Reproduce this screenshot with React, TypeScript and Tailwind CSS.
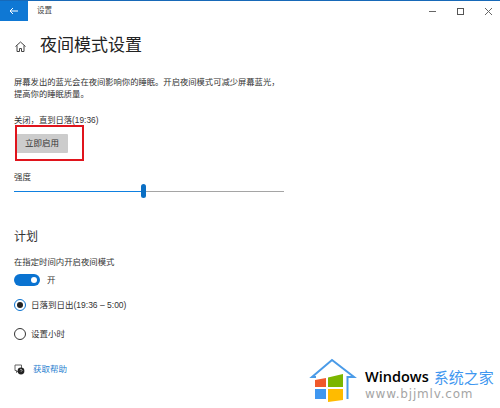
import React from "react";

const cjk = "font-['Liberation_Sans','Noto_Sans_CJK_SC',sans-serif]";
const comma = "\uFF0C";

function Logo() {
  return (
    <div className="absolute left-[308px] top-[357px] flex items-start gap-[8px] pr-[5px]">
      <svg width="49" height="46" viewBox="0 0 49 46" className="shrink-0">
        <path d="M8 20 H4 L24 3 L46 20 H39.500 V42" fill="none" stroke="#4a9be8" strokeWidth="2" />
        <path d="M7 23 L18 21 L18 30 L7 30Z" fill="#f0592b" />
        <path d="M20 20.500 L35 17 L35 30 L20 30Z" fill="#7cb600" />
        <path d="M7 32 L18 32 L18 42 L7 42Z" fill="#3f97f0" />
        <path d="M20 32 L35 32 L35 43 L20 45Z" fill="#ffbb00" />
      </svg>
      <div className="flex flex-col pt-[11px]">
        <div className="flex items-center gap-[5px] leading-[18px] whitespace-nowrap">
          <span className="font-['Open_Sans',sans-serif] text-[14.500px] font-semibold text-black">Windows</span>
          <span className="font-['Noto_Sans_CJK_SC',sans-serif] text-[15px] text-[#3f97f0]">系统之家</span>
        </div>
        <span className="mt-[1px] font-['DejaVu_Sans',sans-serif] text-[12px] leading-[14px] tracking-[0.8px] text-[#a5a5a5]">www.bjjmlv.com</span>
      </div>
    </div>
  );
}

export default function App() {
  return (
    <div className={`relative h-[408px] w-[500px] overflow-hidden bg-white text-[#222] ${cjk}`}>
      <div className="h-[1px] bg-[#1769b8]" />
      <header className="flex h-[20px] items-center">
        <div className="flex h-full w-[28px] items-center justify-center bg-[#0f78d4]">
          <svg width="10" height="8" viewBox="0 0 10 8" fill="none" stroke="#fff" strokeWidth="1">
            <path d="M9 4H1M4 1 1 4l3 3" />
          </svg>
        </div>
        <span className="ml-[9px] text-[7.500px] text-[#444]">设置</span>
        <div className="ml-auto flex items-center gap-[19.500px] pr-[7.500px]">
          <svg width="9" height="9" viewBox="0 0 9 9" stroke="#666" fill="none"><path d="M1 4.500h7" /></svg>
          <svg width="8" height="8" viewBox="0 0 8 8" stroke="#555" fill="none"><rect x="1.500" y="1.500" width="6" height="6" /></svg>
          <svg width="9" height="9" viewBox="0 0 9 9" stroke="#666" fill="none"><path d="M1 1l7 7M8 1 1 8" /></svg>
        </div>
      </header>

      <main className="pl-[14px]">
        <div className="mt-[13px] flex items-center">
          <svg width="13" height="13" viewBox="0 0 13 13" fill="none" stroke="#444" strokeWidth="1">
            <path d="M1.500 6.500 6.500 2l5 4.500M3 5.500v6h2.500V8.500h2v3H10v-6" />
          </svg>
          <h1 className="ml-[13px] text-[17px] leading-[24px] text-[#222]">夜间模式设置</h1>
        </div>

        <p className="mt-[19px] w-[280px] text-[8.300px] leading-[11.500px] text-[#333]">
          屏幕发出的蓝光会在夜间影响你的睡眠。开启夜间模式可减少屏幕蓝光{comma}
          <br />
          提高你的睡眠质量。
        </p>

        <p className="mt-[14px] text-[8.300px] leading-[12px] text-[#333]">关闭{comma}直到日落(19:36)</p>

        <button className="ml-[2px] mt-[8px] flex h-[19px] w-[52px] items-center justify-center rounded-[1px] bg-[#cccccc] text-[8.500px] text-[#333]">
          立即启用
        </button>

        <p className="mt-[18px] text-[8.500px] leading-[12px] text-[#333]">强度</p>
        <div className="flex h-[16px] w-[270px] items-center">
          <div className="h-[1px] w-[127px] bg-[#0f80e0]" />
          <div className="h-[14px] w-[5px] rounded-full bg-[#0b6fc4]" />
          <div className="h-[1px] flex-1 bg-[#a5a5a5]" />
        </div>

        <h2 className="mt-[28px] text-[12px] leading-[20px] text-[#333]">计划</h2>
        <p className="mt-[9px] text-[8.400px] leading-[12px] text-[#333]">在指定时间内开启夜间模式</p>
        <div className="mt-[6px] flex h-[12px] items-center">
          <div className="flex h-[12px] w-[26px] items-center justify-end rounded-full bg-[#0a73d1] pr-[3px]">
            <div className="h-[6px] w-[6px] rounded-full bg-white" />
          </div>
          <span className="ml-[7px] text-[8.500px] leading-[12px] text-[#333]">开</span>
        </div>

        <div className="mt-[13px] flex h-[12px] items-center">
          <div className="flex h-[12px] w-[12px] items-center justify-center rounded-full border border-[#0a73d1]">
            <div className="h-[6px] w-[6px] rounded-full bg-[#222]" />
          </div>
          <span className="ml-[5px] text-[8.500px] leading-[12px] text-[#333]">日落到日出(19:36 – 5:00)</span>
        </div>

        <div className="mt-[17px] flex h-[12px] items-center">
          <div className="h-[12px] w-[12px] rounded-full border border-[#333]" />
          <span className="ml-[5px] text-[8.500px] leading-[12px] text-[#333]">设置小时</span>
        </div>

        <div className="mt-[23px] flex h-[12px] items-center">
          <svg width="11" height="11" viewBox="0 0 11 11">
            <path d="M1 1h6.500v5.500H4.500L2.500 8.500v-2H1Z" fill="none" stroke="#555" strokeWidth="0.900" />
            <circle cx="7" cy="7" r="3.400" fill="#222" />
            <path d="M6.200 6.200a.9.9 0 1 1 1.300.9c-.4.200-.5.400-.5.800" fill="none" stroke="#fff" strokeWidth="0.600" />
          </svg>
          <span className="ml-[8px] text-[8.500px] leading-[12px] text-[#2a7fd0]">获取帮助</span>
        </div>
      </main>

      <div className="absolute left-[15px] top-[125px] h-[36px] w-[69px] border-2 border-[#e0141c]" />
      <Logo />
    </div>
  );
}
